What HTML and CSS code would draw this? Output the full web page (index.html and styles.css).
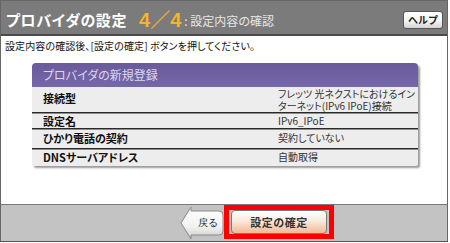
FILE: index.html
```html
<!DOCTYPE html>
<html lang="ja">
  <head>
    <meta charset="UTF-8" />
    <meta name="viewport" content="width=device-width, initial-scale=1.0" />
    <title>プロバイダの設定</title>
    <link rel="stylesheet" href="styles.css">
  </head>
  <body>
    <div class="frame">
      <!-- Title bar -->
      <header class="header">
        <h1 class="title">プロバイダの設定</h1>
        <span class="step">4／4</span>
        <span class="sub">: 設定内容の確認</span>
        <button class="help">ヘルプ</button>
      </header>

      <!-- Summary -->
      <main class="content">
        <p class="lead">設定内容の確認後、[設定の確定] ボタンを押してください。</p>
        <div class="panel">
          <div class="panel-head">プロバイダの新規登録</div>
          <div class="row row-first">
            <span class="label">接続型</span>
            <span class="value">フレッツ 光ネクストにおけるイン<br>ターネット(IPv6 IPoE)接続</span>
          </div>
          <div class="row row-name">
            <span class="label">設定名</span>
            <span class="value">IPv6_IPoE</span>
          </div>
          <div class="row row-phone">
            <span class="label">ひかり電話の契約</span>
            <span class="value">契約していない</span>
          </div>
          <div class="row row-dns">
            <span class="label">DNSサーバアドレス</span>
            <span class="value">自動取得</span>
          </div>
        </div>
      </main>

      <!-- Buttons -->
      <footer class="footer">
        <button class="back">
          <svg class="back-shape" width="44" height="36" viewBox="0 0 44 36">
            <defs>
              <linearGradient id="backGrad" x1="0" y1="0" x2="0" y2="1">
                <stop offset="0" stop-color="#ffffff" />
                <stop offset="0.6" stop-color="#f2f2f2" />
                <stop offset="1" stop-color="#cfcfcf" />
              </linearGradient>
            </defs>
            <path d="M1 18 L11 2 L11 6 L39 6 Q43 6 43 10 L43 26 Q43 30 39 30 L11 30 L11 34 Z"
                  fill="url(#backGrad)" stroke="#8a8a8a" stroke-width="1" />
          </svg>
          <span class="back-text">戻る</span>
        </button>
        <div class="confirm-wrap">
          <button class="confirm">設定の確定</button>
        </div>
      </footer>
    </div>
  </body>
</html>
```

FILE: styles.css
```css
* {
  box-sizing: border-box;
}

body {
  margin: 0;
  background: #fff;
  font-family: "Noto Sans CJK JP", sans-serif;
  font-feature-settings: "palt";
}

.frame {
  width: 448px;
  border-left: 1px solid #666;
  border-right: 1px solid #666;
  border-bottom: 1px solid #555;
}

/* Title bar */
.header {
  display: flex;
  align-items: center;
  height: 36px;
  padding: 5px 4px 0 5px;
  background: #7b7b7b;
  border-top: 1px solid #666;
  border-bottom: 2px solid #4a4a4a;
}

.title {
  margin: 0;
  font-size: 15px;
  font-weight: 700;
  color: #fff;
  letter-spacing: 0.6px;
  line-height: 20px;
}

.step {
  margin-left: 12px;
  font-family: "Liberation Sans", "Noto Sans CJK JP", sans-serif;
  font-size: 20px;
  font-weight: 700;
  color: #f6b528;
  line-height: 20px;
}

.sub {
  margin-left: 3px;
  font-size: 12px;
  color: #e6e6e6;
  line-height: 20px;
  padding-top: 2px;
}

.help {
  margin-left: auto;
  width: 40px;
  height: 18px;
  padding: 0;
  font-family: inherit;
  font-size: 10px;
  font-weight: 700;
  color: #222;
  border: 1px solid #555;
  border-radius: 3px;
  background: linear-gradient(#ffffff, #f4f4f4 55%, #d4d4d4);
  line-height: 16px;
}

/* Summary */
.content {
  display: block;
  height: 168px;
  padding: 2px 4px 0;
}

.lead {
  margin: 0;
  font-size: 10px;
  letter-spacing: 0.1px;
  line-height: 16px;
  color: #111;
}

.panel {
  width: 386px;
  margin: 9px 0 0 27px;
  background: #ededed;
  border-radius: 4px 4px 2px 2px;
  box-shadow: 2px 2px 2px #9a9a9a;
  overflow: hidden;
}

.panel-head {
  height: 24px;
  padding-left: 11px;
  background: linear-gradient(#6a5a9c, #7567a8);
  color: #dcd7ef;
  font-size: 12px;
  line-height: 24px;
}

.row {
  display: grid;
  grid-template-columns: 246px 1fr;
  font-size: 11px;
  line-height: 14px;
  color: #222;
}

.row + .row {
  border-top: 1px solid #2a2a2a;
  box-shadow: inset 0 1px 0 #8c8c8c;
}

.label {
  padding-left: 11px;
  font-weight: 700;
  color: #111;
}

.value {
  font-size: 10px;
  white-space: nowrap;
  color: #333;
}

.row-first {
  height: 25px;
  padding-top: 1px;
  line-height: 12px;
}

.row-first .label {
  padding-top: 4px;
}

.row-name {
  height: 16px;
  padding-top: 1px;
}

.row-phone {
  height: 20px;
  padding-top: 2px;
}

.row-dns {
  height: 18px;
  padding-top: 1px;
}

/* Buttons */
.footer {
  display: flex;
  align-items: flex-start;
  height: 37px;
  padding-left: 179px;
  background: #c3c3c3;
  border-top: 1px solid #7a7a7a;
}

.back {
  position: relative;
  width: 44px;
  height: 36px;
  padding: 0;
  border: 0;
  background: none;
}

.back-shape {
  position: absolute;
  left: 0;
  top: 0;
}

.back-text {
  position: relative;
  display: block;
  padding-left: 12px;
  font-family: inherit;
  font-size: 10px;
  color: #222;
  line-height: 36px;
}

.confirm-wrap {
  width: 110px;
  height: 34px;
  border: 5px solid #f00;
  padding: 0 1px 0 2px;
}

.confirm {
  display: block;
  width: 96px;
  height: 24px;
  padding: 0;
  font-family: inherit;
  font-size: 11px;
  font-weight: 700;
  letter-spacing: 0.5px;
  color: #333;
  border: 1px solid #7a7a7a;
  border-radius: 4px;
  background: linear-gradient(#ffffff, #fbe9dc 45%, #f0b994);
}
```
